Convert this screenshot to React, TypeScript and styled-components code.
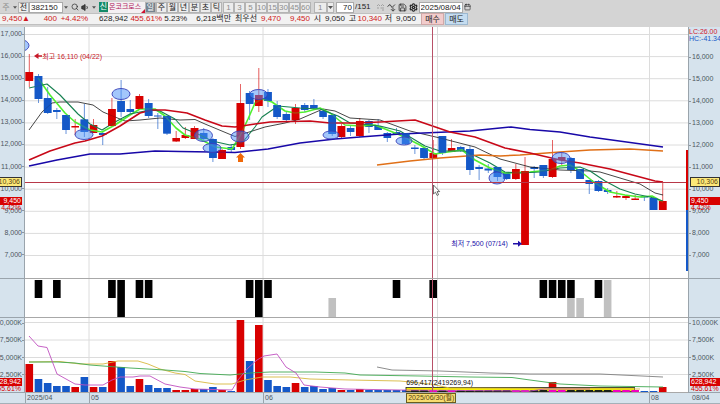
import React from 'react';
import styled, { createGlobalStyle } from 'styled-components';
import { Search, Volume1, Save, Settings, Calendar } from 'lucide-react';

const GlobalStyle = createGlobalStyle`
  * { box-sizing: border-box; }
  html, body, #root { height: 100%; }
  body {
    margin: 0;
    background: #d4d4d4;
    color: #222;
    font-family: "Liberation Sans", "Noto Sans CJK KR", sans-serif;
    font-size: 8px;
    overflow: hidden;
  }
  button, input, select { font: inherit; color: inherit; margin: 0; padding: 0; border-radius: 0; }
`;

const RED = '#d80000';
const BLUE = '#1458c8';

/* ---------- layout ---------- */

const Page = styled.div`
  display: flex;
  flex-direction: column;
  height: 100vh;
  min-height: 320px;
`;

const Toolbar = styled.header`
  display: flex;
  align-items: center;
  height: 13px;
  padding-top: 1px;
  white-space: nowrap;
  line-height: 10px;
`;

const Group = styled.div<{ $gap?: number; $left?: number }>`
  display: flex;
  align-items: center;
  gap: ${(p) => p.$gap ?? 0}px;
  margin-left: ${(p) => p.$left ?? 0}px;
`;

const ToolButton = styled.button<{ $w?: number; $active?: boolean; $dim?: boolean; $flat?: boolean }>`
  display: flex;
  align-items: center;
  justify-content: center;
  flex: none;
  width: ${(p) => p.$w ?? 11}px;
  height: 11px;
  line-height: 9px;
  border: 1px solid ${(p) => (p.$flat ? 'transparent' : '#b4b4b4')};
  background: ${(p) => (p.$active ? '#76838f' : p.$flat ? 'transparent' : '#ececec')};
  color: ${(p) => (p.$active ? '#fff' : p.$dim ? '#8c8c8c' : '#222')};
`;

const ToolSelect = styled.select<{ $w: number }>`
  appearance: none;
  width: ${(p) => p.$w}px;
  height: 11px;
  padding-left: 3px;
  line-height: 9px;
  border: 1px solid #b4b4b4;
  background: #ececec;
  color: #8c8c8c;
`;

const Field = styled.input<{ $w: number; $right?: boolean }>`
  width: ${(p) => p.$w}px;
  height: 11px;
  padding: 0 1px;
  border: 1px solid #aaa;
  background: #fff;
  line-height: 9px;
  text-align: ${(p) => (p.$right ? 'right' : 'left')};
`;

const MarketBadge = styled.span`
  width: 9px;
  height: 10px;
  margin-left: 2px;
  background: #128a68;
  color: #fff;
  line-height: 9px;
  text-align: center;
`;

const StockName = styled.span`
  position: relative;
  width: 37px;
  height: 11px;
  padding-left: 1px;
  background: #f4f0f2;
  color: #b0185c;
  font-size: 7px;
  line-height: 10px;

  &::after {
    content: '';
    position: absolute;
    right: 0;
    bottom: 0;
    border-left: 4px solid transparent;
    border-bottom: 4px solid #d01030;
  }
`;

const QuoteBar = styled.section`
  display: flex;
  align-items: center;
  height: 12px;
  margin-bottom: 2px;
  line-height: 10px;
  white-space: nowrap;
`;

const Quotes = styled.div`
  display: flex;
  align-items: center;
  height: 12px;
  padding-right: 5px;
  border: solid #c0c0c0;
  border-width: 1px 0;
  background: #f2f2f2;
`;

const Quote = styled.span<{ $w: number; $up?: boolean }>`
  width: ${(p) => p.$w}px;
  text-align: right;
  color: ${(p) => (p.$up ? '#d01820' : '#222')};
`;

const OrderButton = styled.button<{ $sell?: boolean }>`
  width: 23px;
  height: 12px;
  margin-right: 1px;
  border: 1px solid ${(p) => (p.$sell ? '#9cb8d0' : '#d0a8a8')};
  background: ${(p) => (p.$sell ? '#c4dcf0' : '#f2cccc')};
  line-height: 9px;
`;

const Chart = styled.main`
  flex: 1;
  display: grid;
  grid-template-columns: 25px minmax(0, 1fr) 32px;
  grid-template-rows: 252fr 39fr 75fr 11px;
  min-height: 0;
  font-size: 7px;
`;

const Plot = styled.div`
  position: relative;
  min-height: 0;
  overflow: hidden;
  background: #fff;
  border-bottom: 1px solid #a8a8a8;
`;

const Drawing = styled.svg`
  display: block;
  width: 100%;
  height: 100%;
`;

const Axis = styled.div<{ $side: 'left' | 'right'; $top?: number; $bottom?: number }>`
  position: relative;
  display: flex;
  flex-direction: column;
  justify-content: space-between;
  min-height: 0;
  overflow: hidden;
  padding: ${(p) => p.$top ?? 0}px 0 ${(p) => p.$bottom ?? 0}px;
  background: #d6e3ed;
  border: 0 solid #9aa4ac;
  border-bottom-width: 1px;
  border-${(p) => (p.$side === 'left' ? 'right' : 'left')}-width: 1px;
`;

const Tick = styled.span<{ $side: 'left' | 'right' }>`
  display: flex;
  flex-direction: ${(p) => (p.$side === 'left' ? 'row' : 'row-reverse')};
  align-items: center;
  justify-content: flex-end;
  gap: ${(p) => (p.$side === 'left' ? 0 : 1)}px;
  height: 10px;
  color: #4c565e;
  line-height: 10px;

  &::after {
    content: '';
    flex: none;
    width: 2px;
    height: 1px;
    background: #8c969e;
  }
`;

/* Value tags float over the axis scale at the level they mark. */
const Tag = styled.span<{ $at: number; $tone: 'cursor' | 'last' | 'plain'; $side: 'left' | 'right' }>`
  position: absolute;
  top: ${(p) => p.$at}%;
  ${(p) => (p.$side === 'left' ? 'left: 0; right: 2px;' : 'left: 1px; right: 0;')}
  display: flex;
  justify-content: ${(p) => (p.$side === 'left' || p.$tone === 'cursor' ? 'flex-end' : 'flex-start')};
  height: ${(p) => (p.$tone === 'cursor' ? 10 : 8)}px;
  padding: 0 1px;
  line-height: 8px;
  border: ${(p) => (p.$tone === 'cursor' ? '1px solid #333' : '0')};
  border-left-width: ${(p) => (p.$tone === 'cursor' && p.$side === 'right' ? 1 : 0)}px;
  background: ${(p) => ({ cursor: '#fde878', last: RED, plain: 'transparent' })[p.$tone]};
  color: ${(p) => ({ cursor: '#554410', last: '#fff', plain: RED })[p.$tone]};
`;

const Legend = styled.div`
  line-height: 7px;
  height: 15px;
  margin-bottom: -3px;
  white-space: nowrap;
`;

const LegendLine = styled.div<{ $color: string }>`
  color: ${(p) => p.$color};
`;

const Note = styled.span<{ $x: number; $y: number; $color: string }>`
  position: absolute;
  left: ${(p) => p.$x}%;
  top: ${(p) => p.$y}%;
  color: ${(p) => p.$color};
  line-height: 9px;
  white-space: nowrap;
`;

const TimeAxis = styled.div`
  position: relative;
  display: grid;
  grid-template-columns: 64fr 174fr 174fr 212fr 39fr;
  background: #d6e3ed;
  border-bottom: 1px solid #a4b0b8;
`;

const AxisEnd = styled.div`
  padding-left: 4px;
  background: #d6e3ed;
  border-bottom: 1px solid #a4b0b8;
  color: #4c565e;
  line-height: 10px;
`;

const Month = styled.span`
  padding-left: 1px;
  border-left: 1px solid #9aa4ac;
  color: #4c565e;
  line-height: 10px;
`;

const DateTag = styled.span`
  position: absolute;
  left: 57.5%;
  top: 0;
  height: 10px;
  padding: 0 1px;
  border: 1px solid #6a5c20;
  background: #f8dc70;
  color: #554410;
  line-height: 8px;
  white-space: nowrap;
`;

/* ---------- data ---------- */

const FIRST_X = 29.3;
const STEP = 9.18;
const xOf = (i: number) => FIRST_X + STEP * i;

// direction, body top, body bottom, wick top, wick bottom
type Candle = ['R' | 'B', number, number, number, number];
const candles: Candle[] = [
  ['R', 72, 81, 54, 87], ['B', 76, 99, 74, 103], ['B', 98, 113, 87, 114], ['B', 110, 112, 108, 119],
  ['B', 115, 130, 115, 134], ['R', 126, 127.5, 119, 135], ['B', 119.5, 132, 104, 137], ['R', 125, 133, 119, 133],
  ['B', 133, 135, 131, 145], ['R', 109, 126, 98, 126], ['B', 101, 112, 80, 117], ['B', 109, 112, 100, 114],
  ['R', 96, 109, 94, 110], ['B', 103, 116, 99, 118], ['B', 115.5, 116.5, 113, 129], ['B', 116, 133.5, 115, 135],
  ['R', 138, 141.5, 131, 142], ['R', 135, 138, 127, 139], ['R', 128, 139, 126, 139], ['B', 133, 139, 128, 140],
  ['B', 139, 158, 138, 162], ['R', 150, 159, 149, 159], ['B', 147, 150, 144, 152], ['R', 103, 147, 84, 149],
  ['B', 93, 104, 91, 120], ['R', 95, 106, 68, 112], ['B', 92, 101, 89, 107], ['B', 105, 117, 101, 119],
  ['B', 114, 120, 112, 121], ['R', 108, 120, 104, 124], ['B', 105, 110, 103, 112], ['B', 105, 108, 99, 109],
  ['B', 111, 117, 109, 119], ['B', 115, 134, 114, 136], ['R', 126, 137, 124, 138], ['B', 128, 132, 125, 136],
  ['R', 121, 136, 118, 137], ['B', 121, 127, 120, 133], ['B', 126, 130, 119, 130], ['B', 133, 138, 132, 142],
  ['B', 132, 134, 128, 134], ['B', 133, 144, 133, 145], ['B', 147.5, 149, 145, 154], ['B', 148, 158, 148, 159],
  ['R', 153, 158, 140, 159], ['B', 136, 153, 136, 155], ['R', 148, 152, 139, 152], ['B', 147, 151, 146, 152],
  ['B', 149, 170, 146, 175], ['B', 167, 169, 165, 180], ['B', 168.5, 170.5, 164, 173], ['B', 167, 177, 167, 181],
  ['B', 173, 179, 172, 180], ['R', 169, 179, 164, 180], ['R', 171, 245, 157, 245], ['B', 167, 169, 166, 178],
  ['B', 165, 176, 165, 178], ['R', 159, 177, 140, 178], ['R', 157, 160, 153, 165], ['B', 158, 170, 157, 173],
  ['B', 169, 179, 169, 179], ['B', 180, 184, 180, 194], ['B', 181, 191, 180, 192], ['B', 190, 192, 188, 194],
  ['R', 196, 197.5, 191, 198], ['R', 196, 198, 195, 200], ['R', 198.5, 200, 195, 200], ['B', 196, 197.5, 196, 201],
  ['B', 198, 210, 196, 210], ['R', 201, 210, 182, 210],
];

const averages = [
  { color: '#181818', width: 0.8, points: '29,130 42,112 52,103 60,102 78,102 93,105 103,112 115,117 125,121 140,120 160,118 170,119 180,120 195,119.5 205,124 235,136.5 265,127 285,123 300,119 323,109 335,111 350,118 380,120 410,131 440,138 475,147 500,159 530,167 560,170 590,171 600,172 620,178 640,184 655,193 663,195' },
  { color: '#50f030', width: 1.6, points: '38,78 50,95 65,113 75,122 90,130 102,132 115,125 130,115 140,109 155,109 165,116 176,128 185,135 200,139 215,147 232,149 240,136 248,119 255,103 262,99 272,102 285,111 295,113 305,112 320,108 330,113 345,125 360,126 375,125 400,135 420,145 435,154 448,152 462,150 475,160 490,168 505,173 530,172 550,170 560,166 570,165 580,171 595,183 610,192 625,195 640,197 652,196 663,202' },
  { color: '#168050', width: 1.1, points: '29,88 38,86 47,84 60,95 78,114 90,124 102,130 115,122 130,114 150,110 160,111 175,119 183,128 200,135 212,141 230,145 242,143 255,127 262,117 278,106 300,108 320,109 338,116 350,123 380,126 400,131 425,146 440,151 465,151 490,163 505,172 520,173 540,172 560,168 580,167 590,171 605,181 620,189 635,194 650,197 663,201' },
  { color: '#e07018', width: 1.5, points: '377,165 410,161 440,158 480,155 500,156 520,155 560,152 590,150 630,149 663,151' },
  { color: '#1808a8', width: 1.5, points: '29,166 57,160 90,154 120,154 155,151 180,151.5 212,152 235,152.5 268,149 300,143 335,139 360,137 400,134 470,131 500,128 511,127 530,129.5 560,132 590,137 663,147' },
  { color: '#c80818', width: 1.6, points: '29,160 50,151 75,143 85,141 102,136 120,126 140,113 152,110 165,110 180,112 187,113 205,120 222,126 235,127 255,124 270,122 310,121 330,123 355,123 380,122 415,120 450,132 475,137 505,148 530,153 560,160 580,163 610,169 655,181 663,182' },
];

const marks: [number, number, number, number][] = [
  [20, 45.5, 9, 6], [84, 134.5, 9, 5], [121, 94, 9, 5.5], [203.5, 135.5, 9, 6], [212, 148, 9, 4.5],
  [240, 136.5, 9, 5.5], [258.5, 94.5, 9, 5], [331, 135, 8, 4], [404, 141, 8, 4], [497, 178, 8, 6], [561, 158, 9, 5.5],
];

const upperSignals = [1, 3, 9, 10, 12, 13, 24, 25, 26, 40, 44, 56, 57, 58, 59, 62];
const lowerSignals = [10, 25];
const graySignals: [number, number, number][] = [[33, 298, 317], [59, 298, 317], [60, 298, 317], [63, 280, 317]];

const volumeTops = [
  364, 379, 383, 386, 386, 387, 377, 387, 387, 361, 367, 386, 379, 385, 388, 388, 390, 390, 389, 389, 387, 390, 391,
  320, 361, 325, 380, 386, 387, 383, 387, 386, 389, 388, 390, 390, 389, 390, 390, 390, 390, 390, 390, 390, 390, 389,
  390, 390, 390, 390, 390, 390, 390, 390, 389, 390, 390, 382, 389, 390, 390, 390, 390, 390, 390, 391, 391, 391, 391, 387,
];

const volumeLines = [
  { color: '#d8b840', points: '29,362 60,361.5 80,364 103,364 118,361 138,361 148,364 160,369 175,373 185,374.5 195,381 215,384 232,384 245,380 262,377 290,377 310,379 350,380 400,381 430,384 450,388 640,389' },
  { color: '#40a850', points: '29,362 57,362 75,363 90,365 103,366 130,368 165,370 185,371.5 200,373.5 230,375 250,373 270,372 315,372 345,373 360,375 420,376 470,377 512,377.5 530,380 560,384 600,386 663,387' },
  { color: '#c050c0', points: '29,336 38,346 47,347.5 57,374 75,384 85,385 103,385 112,380 120,377 133,377 140,376 150,376 165,384 180,387 195,389 232,390 238,380 248,368 257,360 264,356 277,354 286,367 296,373 304,385 320,387 345,389 400,390 530,391 545,389 590,389' },
  { color: '#808080', points: '377,367 392,370 440,371 490,373 530,374 600,374 663,377' },
];

const monthLines = [89, 263, 437.5, 649.5];
const prices = ['17,000', '16,000', '15,000', '14,000', '13,000', '12,000', '11,000', '10,000', '9,000', '8,000', '7,000'];
const volumes = ['10,000K', '7,500K', '5,000K', '2,500K'];
const CURSOR_X = 432.5;

/* ---------- parts ---------- */

const Caret = () => (
  <svg width="5" height="3" viewBox="0 0 5 3" aria-hidden="true">
    <path d="M0 0h5L2.500 3z" fill="#555" />
  </svg>
);

const CompareIcon = () => (
  <svg width="9" height="9" viewBox="0 0 9 9" fill="none" stroke="#a0a0a0" aria-hidden="true">
    <path d="M1 3l1.500-1.500L4 3M5 3l1.500-1.500L8 3M1 5h2M4.500 5H8M6 7h2" />
  </svg>
);

const TrendIcon = () => (
  <svg width="9" height="9" viewBox="0 0 9 9" fill="none" stroke="#444" aria-hidden="true">
    <path d="M0.500 3.500L3 1.500l2 3 3-3M6 4.500v3.500M4 6.200l2 2 2-2" />
  </svg>
);

const MonthLines = ({ from, to }: { from: number; to: number }) => (
  <>
    {monthLines.map((x) => (
      <line key={x} x1={x} x2={x} y1={from} y2={to} stroke="#dcdcdc" />
    ))}
  </>
);

const Crosshair = ({ from, to }: { from: number; to: number }) => (
  <line x1={CURSOR_X} x2={CURSOR_X} y1={from} y2={to} stroke="#b85068" />
);

function PricePlot() {
  return (
    <Plot>
      <Drawing viewBox="25 27 663 251" preserveAspectRatio="none" role="img" aria-label="일봉 차트">
        {prices.map((p, i) => (
          <line key={p} x1="25" x2="688" y1={34.5 + i * 22.1} y2={34.5 + i * 22.1} stroke="#dcdcdc" />
        ))}
        <MonthLines from={27} to={279} />
        {candles.map(([dir, top, bottom, high, low], i) => {
          const color = dir === 'R' ? RED : BLUE;
          return (
            <g key={i}>
              <line x1={xOf(i)} x2={xOf(i)} y1={high} y2={low} stroke={color} strokeWidth="0.8" opacity="0.8" />
              <rect x={xOf(i) - 3.8} y={top} width="7.6" height={bottom - top} fill={color} />
            </g>
          );
        })}
        {averages.map((a) => (
          <polyline key={a.color} points={a.points} fill="none" stroke={a.color} strokeWidth={a.width} strokeLinejoin="round" />
        ))}
        {candles.map(([dir, top, bottom], i) =>
          bottom - top > 8 ? (
            <rect key={i} x={xOf(i) - 3.8} y={top} width="7.6" height={bottom - top} fill={dir === 'R' ? RED : BLUE} opacity="0.75" />
          ) : null,
        )}
        {marks.map(([cx, cy, rx, ry]) => (
          <ellipse key={cx} cx={cx} cy={cy} rx={rx} ry={ry} fill="#4890f8" fillOpacity="0.5" stroke="#3840b8" strokeWidth="0.9" />
        ))}
        <path d="M240.500 153l4.500 4.500h-2v4.500h-5v-4.500h-2z" fill="#f06808" />
        <path d="M34 56l4.500-3v2.300h3.500v1.400h-3.500V59z" fill="#c81828" />
        <path d="M522 243.700l-4-3v2.300h-5v1.400h5v2.300z" fill="#2010a8" />
        <line x1="25" x2="688" y1="182.500" y2="182.500" stroke="#b83848" />
        <Crosshair from={27} to={279} />
        <path d="M687 150v60" stroke={RED} strokeWidth="2" />
        <path d="M687 210v61" stroke={BLUE} strokeWidth="2" />
        <path d="M433.500 185v9l2-1.800 1.500 3.200 1.600-.7-1.500-3.100h2.600z" fill="#fff" stroke="#333" strokeWidth="0.700" />
      </Drawing>
      <Note $x={2.6} $y={9.8} $color="#c81828">최고 16,110 (04/22)</Note>
      <Note $x={64.3} $y={84.3} $color="#2010a8">최저 7,500 (07/14)</Note>
    </Plot>
  );
}

function SignalPlot() {
  return (
    <Plot>
      <Drawing viewBox="25 279 663 38" preserveAspectRatio="none" role="img" aria-label="신호">
        <MonthLines from={279} to={318} />
        {upperSignals.map((i) => (
          <rect key={i} x={xOf(i) - 3.8} y="280" width="7.600" height="18" fill="#000" />
        ))}
        {lowerSignals.map((i) => (
          <rect key={i} x={xOf(i) - 3.8} y="298" width="7.600" height="19" fill="#000" />
        ))}
        {graySignals.map(([i, top, bottom]) => (
          <rect key={i} x={xOf(i) - 3.8} y={top} width="7.600" height={bottom - top} fill="#c0c0c0" />
        ))}
        <Crosshair from={279} to={318} />
      </Drawing>
    </Plot>
  );
}

function VolumePlot() {
  return (
    <Plot>
      <Drawing viewBox="25 318 663 74" preserveAspectRatio="none" role="img" aria-label="거래량">
        {[322.5, 340, 357.5, 374.5].map((y) => (
          <line key={y} x1="25" x2="688" y1={y} y2={y} stroke="#dcdcdc" />
        ))}
        <MonthLines from={318} to={392} />
        {volumeTops.map((top, i) => (
          <rect key={i} x={xOf(i) - 3.8} y={top} width="7.600" height={392 - top} fill={candles[i][0] === 'R' ? RED : BLUE} />
        ))}
        <rect x="406" y="387.500" width="228.500" height="4" fill="#f8f000" stroke="#222" strokeWidth="0.800" />
        {candles.slice(42, 67).map(([dir], n) => (
          <rect key={n} x={xOf(n + 42) - 3.8} y="390" width="7.600" height="2" fill={dir === 'R' ? '#f000c0' : '#182018'} />
        ))}
        {volumeLines.map((l) => (
          <polyline key={l.color} points={l.points} fill="none" stroke={l.color} strokeWidth="0.900" />
        ))}
        <Crosshair from={318} to={392} />
      </Drawing>
      <Note $x={57.5} $y={81.5} $color="#111">696,417(2419269,94)</Note>
    </Plot>
  );
}

function PriceAxis({ side }: { side: 'left' | 'right' }) {
  const isRight = side === 'right';
  return (
    <Axis $side={side} $top={isRight ? 1 : 2} $bottom={18}>
      {isRight && (
        <Legend>
          <LegendLine $color="#d01830">LC:26.00</LegendLine>
          <LegendLine $color="#1858c8">HC:-41.34</LegendLine>
        </Legend>
      )}
      {(isRight ? prices.slice(1) : prices).map((p) => (
        <Tick key={p} $side={side}>{p}</Tick>
      ))}
      <Tag $side={side} $tone="cursor" $at={59.9}>10,306</Tag>
      <Tag $side={side} $tone="last" $at={67.6}>9,450</Tag>
      <Tag $side={side} $tone="plain" $at={70.6}>4.42%</Tag>
    </Axis>
  );
}

function VolumeAxis({ side }: { side: 'left' | 'right' }) {
  return (
    <Axis $side={side} $bottom={12}>
      {volumes.map((v) => (
        <Tick key={v} $side={side}>{v}</Tick>
      ))}
      <Tag $side={side} $tone="last" $at={80.5}>628,942</Tag>
      <Tag $side={side} $tone="plain" $at={90}>455.61%</Tag>
    </Axis>
  );
}

const quotes: { text: string; w: number; up?: boolean }[] = [
  { text: '9,450▲', w: 30, up: true },
  { text: '400', w: 27, up: true },
  { text: '+4.42%', w: 31, up: true },
  { text: '628,942', w: 40 },
  { text: '455.61%', w: 34, up: true },
  { text: '5.23%', w: 25 },
  { text: '6,218백만', w: 44 },
  { text: '최우선', w: 26 },
  { text: '9,470', w: 24, up: true },
  { text: '9,450', w: 29, up: true },
  { text: '시', w: 11 },
  { text: '9,050', w: 24 },
  { text: '고', w: 11 },
  { text: '10,340', w: 26, up: true },
  { text: '저', w: 10 },
  { text: '9,050', w: 24 },
];

export default function App() {
  return (
    <Page>
      <GlobalStyle />
      <Toolbar>
        <ToolButton $w={12} $dim $flat>주</ToolButton>
        <ToolButton $w={6} $flat aria-label="목록"><Caret /></ToolButton>
        <ToolButton>전</ToolButton>
        <Field $w={34} defaultValue="382150" aria-label="종목코드" />
        <ToolButton $w={6} $flat aria-label="종목 목록"><Caret /></ToolButton>
        <ToolButton $flat aria-label="검색"><Search size={8} /></ToolButton>
        <ToolButton $flat aria-label="소리"><Volume1 size={9} fill="#444" /></ToolButton>
        <ToolButton $w={6} $flat aria-label="소리 설정"><Caret /></ToolButton>
        <MarketBadge>신</MarketBadge>
        <StockName>온코크로스</StockName>
        <Group>
          {['일', '주', '월', '년', '분', '초', '틱'].map((t, i) => (
            <ToolButton key={t} $active={i === 0}>{t}</ToolButton>
          ))}
        </Group>
        <Group $left={1}>
          {['1', '3', '5', '10', '15', '30', '45', '60'].map((t) => (
            <ToolButton key={t} $dim>{t}</ToolButton>
          ))}
        </Group>
        <Group $left={3}>
          <ToolSelect $w={13} aria-label="주기"><option>1</option></ToolSelect>
          <ToolButton $w={7} aria-label="주기 목록"><Caret /></ToolButton>
        </Group>
        <Group $left={2} $gap={1}>
          <Field $w={18} $right defaultValue="70" aria-label="봉 개수" />
          <span>/151</span>
        </Group>
        <Group $left={4}>
          <ToolButton $flat aria-label="비교"><CompareIcon /></ToolButton>
          <ToolButton $flat aria-label="추세"><TrendIcon /></ToolButton>
          <ToolButton $flat aria-label="저장"><Save size={9} /></ToolButton>
          <ToolButton $flat aria-label="설정"><Settings size={9} strokeWidth={3} /></ToolButton>
        </Group>
        <Group>
          <Field $w={44} defaultValue="2025/08/04" aria-label="기준일" />
          <ToolButton $w={9} $flat aria-label="달력"><Calendar size={8} /></ToolButton>
        </Group>
      </Toolbar>
      <QuoteBar>
        <Quotes>
          {quotes.map((q, i) => (
            <Quote key={i} $w={q.w} $up={q.up}>{q.text}</Quote>
          ))}
        </Quotes>
        <OrderButton>매수</OrderButton>
        <OrderButton $sell>매도</OrderButton>
      </QuoteBar>
      <Chart>
        <PriceAxis side="left" />
        <PricePlot />
        <PriceAxis side="right" />
        <Axis $side="left" />
        <SignalPlot />
        <Axis $side="right" />
        <VolumeAxis side="left" />
        <VolumePlot />
        <VolumeAxis side="right" />
        <AxisEnd />
        <TimeAxis>
          <Month>2025/04</Month>
          <Month>05</Month>
          <Month>06</Month>
          <Month />
          <Month>08</Month>
          <DateTag>2025/06/30(월)</DateTag>
        </TimeAxis>
        <AxisEnd>08/04</AxisEnd>
      </Chart>
    </Page>
  );
}
